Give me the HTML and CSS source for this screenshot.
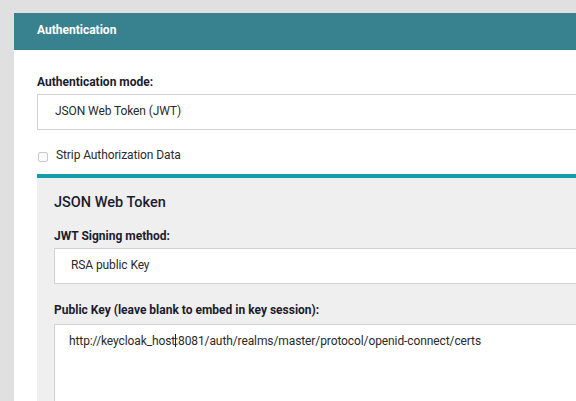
FILE: index.html
```html
<!DOCTYPE html>
<html>
<head>
<meta charset="utf-8">
<link rel="stylesheet" href="styles.css">
</head>
<body>
<div class="card">
  <div class="card-header">Authentication</div>
  <div class="card-body">
    <div class="label label-first">Authentication mode:</div>
    <div class="field">JSON Web Token (JWT)</div>
    <label class="check-row"><span class="checkbox"></span><span>Strip Authorization Data</span></label>
    <div class="panel">
      <div class="panel-title">JSON Web Token</div>
      <div class="label label-signing">JWT Signing method:</div>
      <div class="field field-inner">RSA public Key</div>
      <div class="label label-key">Public Key (leave blank to embed in key session):</div>
      <div class="textarea">http://keycloak_host<span class="caret"></span>:8081/auth/realms/master/protocol/openid-connect/certs</div>
    </div>
  </div>
</div>
</body>
</html>
```
FILE: styles.css
```css
html, body {
  margin: 0;
  padding: 0;
  overflow: hidden;
  height: 100%;
}
body {
  background: #e0e0e0;
  font-family: Roboto, "Liberation Sans", Arial, sans-serif;
  font-size: 12px;
  color: #1c1c2c;
}
.card {
  margin: 13px -300px 0 14px;
  background: #ffffff;
  min-height: 500px;
}
.card-header {
  height: 37px;
  line-height: 34px;
  padding: 0 23px;
  background: #38828f;
  color: #ffffff;
  font-weight: 700;
  font-size: 12px;
}
.card-body {
  padding: 24px 0 0 23px;
}
.label {
  font-weight: 700;
  line-height: 16px;
  color: #1c1c2c;
}
.label-first { margin-bottom: 4px; }
.label-signing { margin: 15px 0 4px; }
.label-key { margin: 18px 0 6px; }
.field {
  height: 36px;
  box-sizing: border-box;
  border: 1px solid #d2d2d2;
  background: #ffffff;
  line-height: 33px;
  padding-left: 17px;
  color: #2a2a2a;
  letter-spacing: -0.1px;
}
.field-inner { padding-left: 16px; }
.check-row {
  display: flex;
  align-items: center;
  height: 16px;
  margin-top: 17px;
  color: #2a2a2a;
  letter-spacing: -0.1px;
}
.checkbox {
  width: 8px;
  height: 8px;
  margin: 3px 8px 0 1px;
  border: 1px solid #c8c8c8;
  border-radius: 2px;
  background: #fafafa;
}
.panel {
  margin-top: 11px;
  border-top: 4px solid #109ca9;
  background: #efefef;
  padding: 15px 0 0 17px;
  min-height: 300px;
}
.panel-title {
  font-size: 14.5px;
  font-weight: 500;
  line-height: 20px;
  color: #1c1c2c;
}
.textarea {
  box-sizing: border-box;
  height: 120px;
  border: 1px solid #d2d2d2;
  background: #ffffff;
  padding: 8px 0 0 14px;
  line-height: 16px;
  color: #2a2a2a;
  letter-spacing: -0.1px;
}
.caret {
  display: inline-block;
  width: 1px;
  height: 13px;
  margin-right: -1px;
  background: #222;
  vertical-align: -2px;
}
```
